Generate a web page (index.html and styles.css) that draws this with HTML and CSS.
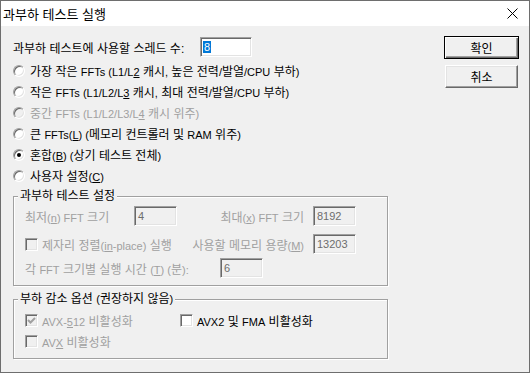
FILE: index.html
```html
<!DOCTYPE html>
<html lang="ko">
<head>
    <meta charset="UTF-8">
    <title>과부하 테스트 실행</title>
    <link rel="stylesheet" href="styles.css">
</head>
<body>
    <div class="window">
        <div class="titlebar">
            <span class="title">과부하 테스트 실행</span>
            <svg class="close" width="11" height="11" viewBox="0 0 11 11">
                <path d="M0.5 0.5 L10.5 10.5 M10.5 0.5 L0.5 10.5" stroke="#000" stroke-width="1" fill="none"/>
            </svg>
        </div>

        <div class="dialog">
            <div class="top">
                <div class="options">
                    <div class="thread-row">
                        <span class="thread-label">과부하 테스트에 사용할 스레드 수:</span>
                        <div class="edit thread-edit"><span class="sel">8</span></div>
                    </div>
                    <div class="radios">
                        <div class="radio-row"><span class="radio"></span><span>가장 작은 <span class="en">FFTs (L1/L<u>2</u></span> 캐시<span class="en">,</span> 높은 전력<span class="en">/</span>발열<span class="en">/CPU</span> 부하<span class="en">)</span></span></div>
                        <div class="radio-row"><span class="radio"></span><span>작은 <span class="en">FFTs (L1/L2/L<u>3</u></span> 캐시<span class="en">,</span> 최대 전력<span class="en">/</span>발열<span class="en">/CPU</span> 부하<span class="en">)</span></span></div>
                        <div class="radio-row off"><span class="radio"></span><span>중간 <span class="en">FFTs (L1/L2/L3/L<u>4</u></span> 캐시 위주<span class="en">)</span></span></div>
                        <div class="radio-row"><span class="radio"></span><span>큰 <span class="en">FFTs(<u>L</u>) (</span>메모리 컨트롤러 및 <span class="en">RAM</span> 위주<span class="en">)</span></span></div>
                        <div class="radio-row"><span class="radio checked"></span><span>혼합<span class="en">(<u>B</u>) (</span>상기 테스트 전체<span class="en">)</span></span></div>
                        <div class="radio-row"><span class="radio"></span><span>사용자 설정<span class="en">(<u>C</u>)</span></span></div>
                    </div>
                </div>
                <div class="buttons">
                    <button class="btn default">확인</button>
                    <button class="btn">취소</button>
                </div>
            </div>

            <fieldset class="group settings">
                <legend>과부하 테스트 설정</legend>
                <div class="field-row">
                    <span class="lbl min-lbl">최저<span class="en">(<u>n</u>) FFT</span> 크기</span>
                    <div class="edit small">4</div>
                    <span class="lbl right">최대<span class="en">(<u>x</u>) FFT</span> 크기</span>
                    <div class="edit small">8192</div>
                </div>
                <div class="field-row second">
                    <span class="check"></span>
                    <span class="lbl">제자리 정렬<span class="en">(<u>in</u>-place)</span> 실행</span>
                    <span class="lbl right">사용할 메모리 용량<span class="en">(<u>M</u>)</span></span>
                    <div class="edit small">13203</div>
                </div>
                <div class="field-row third">
                    <span class="lbl time-lbl">각 <span class="en">FFT</span> 크기별 실행 시간 <span class="en">(<u>T</u>) (</span>분<span class="en">):</span></span>
                    <div class="edit small">6</div>
                </div>
            </fieldset>

            <fieldset class="group reduce">
                <legend>부하 감소 옵션 <span class="en">(</span>권장하지 않음<span class="en">)</span></legend>
                <div class="check-row">
                    <div class="check-item off first">
                        <span class="check">
                            <svg width="11" height="11" viewBox="0 0 11 11">
                                <path d="M2 5 L4.5 7.5 L9 3" stroke="#a0a0a0" stroke-width="2" fill="none"/>
                            </svg>
                        </span>
                        <span><span class="en">AVX-<u>5</u>12</span> 비활성화</span>
                    </div>
                    <div class="check-item">
                        <span class="check on"></span>
                        <span><span class="en">AVX2</span> 및 <span class="en">FMA</span> 비활성화</span>
                    </div>
                </div>
                <div class="check-row">
                    <div class="check-item off">
                        <span class="check"></span>
                        <span><span class="en">AV<u>X</u></span> 비활성화</span>
                    </div>
                </div>
            </fieldset>
        </div>
    </div>
</body>
</html>
```

FILE: styles.css
```css
* {
    margin: 0;
    padding: 0;
    box-sizing: border-box;
}

body {
    background: #fff;
    font-family: "Liberation Sans", "Noto Sans CJK KR", sans-serif;
    font-size: 12px;
    color: #000;
}

/* 라틴 문자는 한글보다 작게 */
.en {
    font-size: 11px;
}

.window {
    width: 530px;
    height: 373px;
    border: 1px solid #6e6e6e;
    background: #f0f0f0;
    display: flex;
    flex-direction: column;
}

.titlebar {
    height: 25px;
    background: #fff;
    display: flex;
    align-items: center;
    justify-content: space-between;
    padding: 0 11px 0 2px;
    font-size: 13px;
}

.dialog {
    flex: 1;
    padding: 10px 10px 0 12px;
}

.top {
    display: flex;
    justify-content: space-between;
}

.thread-row {
    display: flex;
    align-items: center;
    height: 20px;
    margin-top: 1px;
}

.thread-label {
    width: 187px;
}

.edit {
    height: 20px;
    background: #fff;
    border: 1px solid;
    border-color: #a0a0a0 #fff #fff #a0a0a0;
    box-shadow: inset 1px 1px #696969, inset -1px -1px #e3e3e3;
    padding: 2px 3px;
    font-size: 11px;
    line-height: 14px;
    white-space: nowrap;
}

.thread-edit {
    width: 52px;
    padding-left: 2px;
}

.sel {
    background: #0078d7;
    color: #fff;
    padding: 0 1px;
}

.radios {
    margin-top: 3px;
}

.radio-row {
    height: 21px;
    display: flex;
    align-items: center;
    gap: 5px;
    white-space: nowrap;
}

.radio {
    position: relative;
    flex: none;
    width: 12px;
    height: 12px;
    border-radius: 50%;
    background: #fff;
    border: 1px solid;
    border-color: #a0a0a0 #fff #fff #a0a0a0;
    box-shadow: inset 1px 1px #696969, inset -1px -1px #e3e3e3;
}

.radio.checked::after {
    content: "";
    position: absolute;
    left: 3px;
    top: 3px;
    width: 4px;
    height: 4px;
    border-radius: 50%;
    background: #000;
}

.off {
    color: #a0a0a0;
}

.off .radio,
.off .check {
    background: #f0f0f0;
}

.buttons {
    display: flex;
    flex-direction: column;
    align-items: center;
    gap: 6px;
    width: 75px;
}

.btn {
    width: 73px;
    height: 23px;
    font: inherit;
    color: #000;
    background: #f0f0f0;
    border: 1px solid;
    border-color: #fff #696969 #696969 #fff;
    box-shadow: inset -1px -1px #a0a0a0, inset 1px 1px #e3e3e3;
}

.btn.default {
    width: 75px;
    border: 1px solid #000;
    box-shadow: inset 1px 1px #fff, inset -1px -1px #696969, inset -2px -2px #a0a0a0;
}

.group {
    width: 375px;
    border: 1px solid #a0a0a0;
    box-shadow: 1px 1px 0 #fff, inset 1px 1px 0 #fff;
}

.group legend {
    margin-left: -7px;
    padding: 0 2px;
    line-height: 13px;
    color: #000;
    background: #f0f0f0;
}

.settings {
    margin-top: 4px;
    padding: 3px 31px 7px 11px;
    color: #a0a0a0;
}

.field-row {
    display: flex;
    align-items: center;
    height: 20px;
    white-space: nowrap;
}

.field-row.second {
    margin-top: 8px;
}

.field-row.third {
    margin-top: 4px;
}

.settings .edit {
    background: #f0f0f0;
    color: #6d6d6d;
}

.edit.small {
    width: 43px;
}

.min-lbl {
    width: 109px;
}

.time-lbl {
    width: 195px;
}

.lbl.right {
    flex: 1;
    text-align: right;
    padding-right: 9px;
}

.check {
    flex: none;
    width: 13px;
    height: 13px;
    border: 1px solid;
    border-color: #a0a0a0 #fff #fff #a0a0a0;
    box-shadow: inset 1px 1px #696969, inset -1px -1px #e3e3e3;
    background: #f0f0f0;
    margin-right: 4px;
}

.check svg {
    display: block;
}

.check.on {
    background: #fff;
}

.reduce {
    margin-top: 7px;
    padding: 8px 11px 10px 11px;
}

.check-row {
    display: flex;
    align-items: center;
    height: 13px;
}

.check-row + .check-row {
    margin-top: 8px;
}

.check-item {
    display: flex;
    align-items: center;
    white-space: nowrap;
}

.check-item.first {
    width: 155px;
}
```
